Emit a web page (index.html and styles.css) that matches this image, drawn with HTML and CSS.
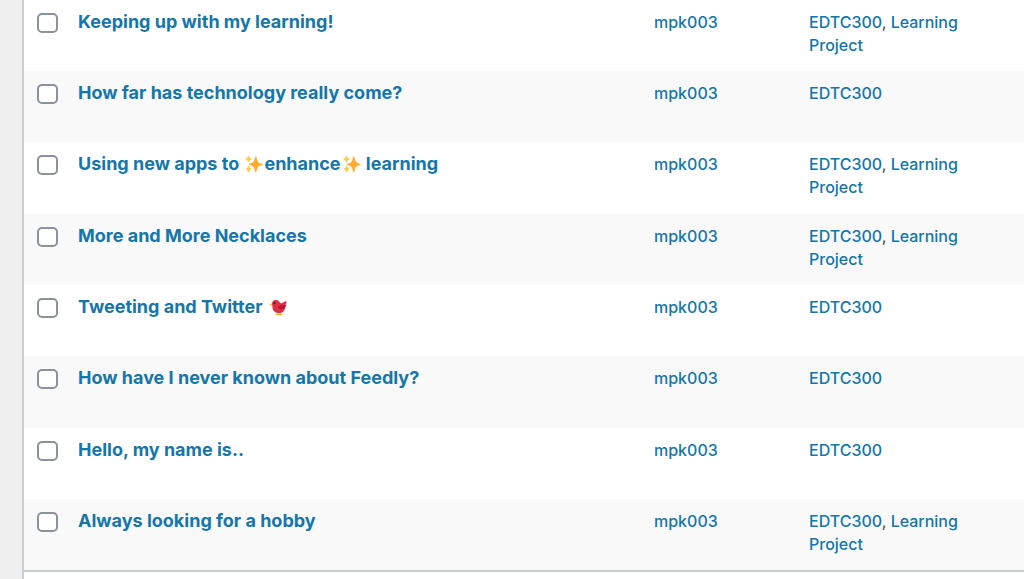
FILE: index.html
```
<!DOCTYPE html>
<html lang="en">
<head>
<meta charset="utf-8">
<title>Posts</title>
<link rel="stylesheet" href="styles.css">
</head>
<body>
<svg class="symbols" aria-hidden="true">
  <symbol id="sparkles" viewBox="0 0 36 36">
    <path fill="#ffac33" d="M34.500 17.500c-8-1.500-10-4.500-11.500-13-.3-2-2.700-2-3 0-1.500 8.500-3.500 11.500-11.500 13-1.500.3-1.500 2 0 2.300 8 1.500 10 4.500 11.500 13 .3 2 2.700 2 3 0 1.500-8.500 3.500-11.500 11.500-13 1.500-.3 1.500-2 0-2.300z"/>
    <path fill="#ffcc4d" d="M12 27q-3-1-4-5-.8-1-1.600 0-1 4-4 5-1 1 0 2 3 1 4 5 .8 1 1.600 0 1-4 4-5 1-1 0-2zM13 7q-4-1-5-5-.8-1-1.600 0-1 4-5 5-1 1 0 2 4 1 5 5 .8 1 1.600 0 1-4 5-5 1-1 0-2z"/>
  </symbol>
  <symbol id="bird" viewBox="0 0 36 36">
    <path fill="none" stroke="#ffac33" stroke-width="2" d="M17 28v5m-4 0h7M22 28v5m-3 0h7"/>
    <path fill="#ffac33" d="M7 9 1 14l7 2z"/>
    <path fill="#dd2e44" d="M6 12C6 6 10 3 15 4c5 1 6 5 9 7l10-5c2 1 1 4-1 7l2 2-3 4c0 8-7 12-14 11C10 29 6 23 7 16z"/>
    <path fill="#be1931" d="M18 17c5-3 10-3 16-2l-3 3 2 1-4 2c-4 3-9 1-11-4z"/>
    <circle cx="11" cy="10" r="2" fill="#292f33"/>
  </symbol>
</svg>
<main class="content">
<table class="posts">
  <colgroup><col class="col-check"><col><col class="col-author"><col class="col-categories"></colgroup>
  <tbody>
    <tr><td class="check"><input type="checkbox" aria-label="Select Keeping up with my learning!"></td><td class="name"><a class="title" href="#">Keeping up with my learning!</a></td><td><a href="#">mpk003</a></td><td><a href="#">EDTC300</a>, <a href="#">Learning Project</a></td></tr>
    <tr><td class="check"><input type="checkbox" aria-label="Select How far has technology really come?"></td><td class="name"><a class="title" href="#">How far has technology really come?</a></td><td><a href="#">mpk003</a></td><td><a href="#">EDTC300</a></td></tr>
    <tr><td class="check"><input type="checkbox" aria-label="Select Using new apps to enhance learning"></td><td class="name"><a class="title" href="#">Using new apps to <svg class="emoji" aria-hidden="true"><use href="#sparkles"/></svg>enhance<svg class="emoji" aria-hidden="true"><use href="#sparkles"/></svg> learning</a></td><td><a href="#">mpk003</a></td><td><a href="#">EDTC300</a>, <a href="#">Learning Project</a></td></tr>
    <tr><td class="check"><input type="checkbox" aria-label="Select More and More Necklaces"></td><td class="name"><a class="title" href="#">More and More Necklaces</a></td><td><a href="#">mpk003</a></td><td><a href="#">EDTC300</a>, <a href="#">Learning Project</a></td></tr>
    <tr><td class="check"><input type="checkbox" aria-label="Select Tweeting and Twitter"></td><td class="name"><a class="title" href="#">Tweeting and Twitter <svg class="emoji" aria-hidden="true"><use href="#bird"/></svg></a></td><td><a href="#">mpk003</a></td><td><a href="#">EDTC300</a></td></tr>
    <tr><td class="check"><input type="checkbox" aria-label="Select How have I never known about Feedly?"></td><td class="name"><a class="title" href="#">How have I never known about Feedly?</a></td><td><a href="#">mpk003</a></td><td><a href="#">EDTC300</a></td></tr>
    <tr><td class="check"><input type="checkbox" aria-label="Select Hello, my name is.."></td><td class="name"><a class="title" href="#">Hello, my name is..</a></td><td><a href="#">mpk003</a></td><td><a href="#">EDTC300</a></td></tr>
    <tr><td class="check"><input type="checkbox" aria-label="Select Always looking for a hobby"></td><td class="name"><a class="title" href="#">Always looking for a hobby</a></td><td><a href="#">mpk003</a></td><td><a href="#">EDTC300</a>, <a href="#">Learning Project</a></td></tr>
  </tbody>
</table>
</main>
</body>
</html>
```
FILE: styles.css
```
* { box-sizing: border-box; }
body {
  margin: 0;
  padding-left: 22px;
  background: #f0f0f1;
  color: #50575e;
  font: 500 16px/23px Inter, "Liberation Sans", sans-serif;
}
.symbols { display: none; }
.content {
  min-height: 100vh;
  background: #fff;
  border-left: 2px solid #c9cdd2;
}
.posts {
  width: 100%;
  table-layout: fixed;
  border-collapse: separate;
  border-spacing: 0;
}
.col-check { width: 42px; }
.col-author { width: 155px; }
.col-categories { width: 227px; }
.posts tr { height: 71px; }
.posts tr:nth-child(3n) { height: 72px; }
.posts tr:nth-child(even) { background: #f9f9f9; }
.posts td {
  padding: 11px 52px 0 12px;
  vertical-align: top;
}
.posts .name { padding: 10px 12px 0; }
.posts .check { padding: 13px 0 0 13px; }
.posts tr:last-child { height: 73px; }
.posts tr:last-child td { border-bottom: 2px solid #c9cdd2; }
a { color: #1476a9; text-decoration: none; }
.title { font-size: 18px; font-weight: 700; }
input {
  display: block;
  appearance: none;
  width: 21px;
  height: 20px;
  margin: 0;
  background: #fff;
  border: 2px solid #8c9299;
  border-radius: 5px;
}
.emoji { width: 18px; height: 18px; margin: 0 1px 0 2px; vertical-align: -3px; }
```
